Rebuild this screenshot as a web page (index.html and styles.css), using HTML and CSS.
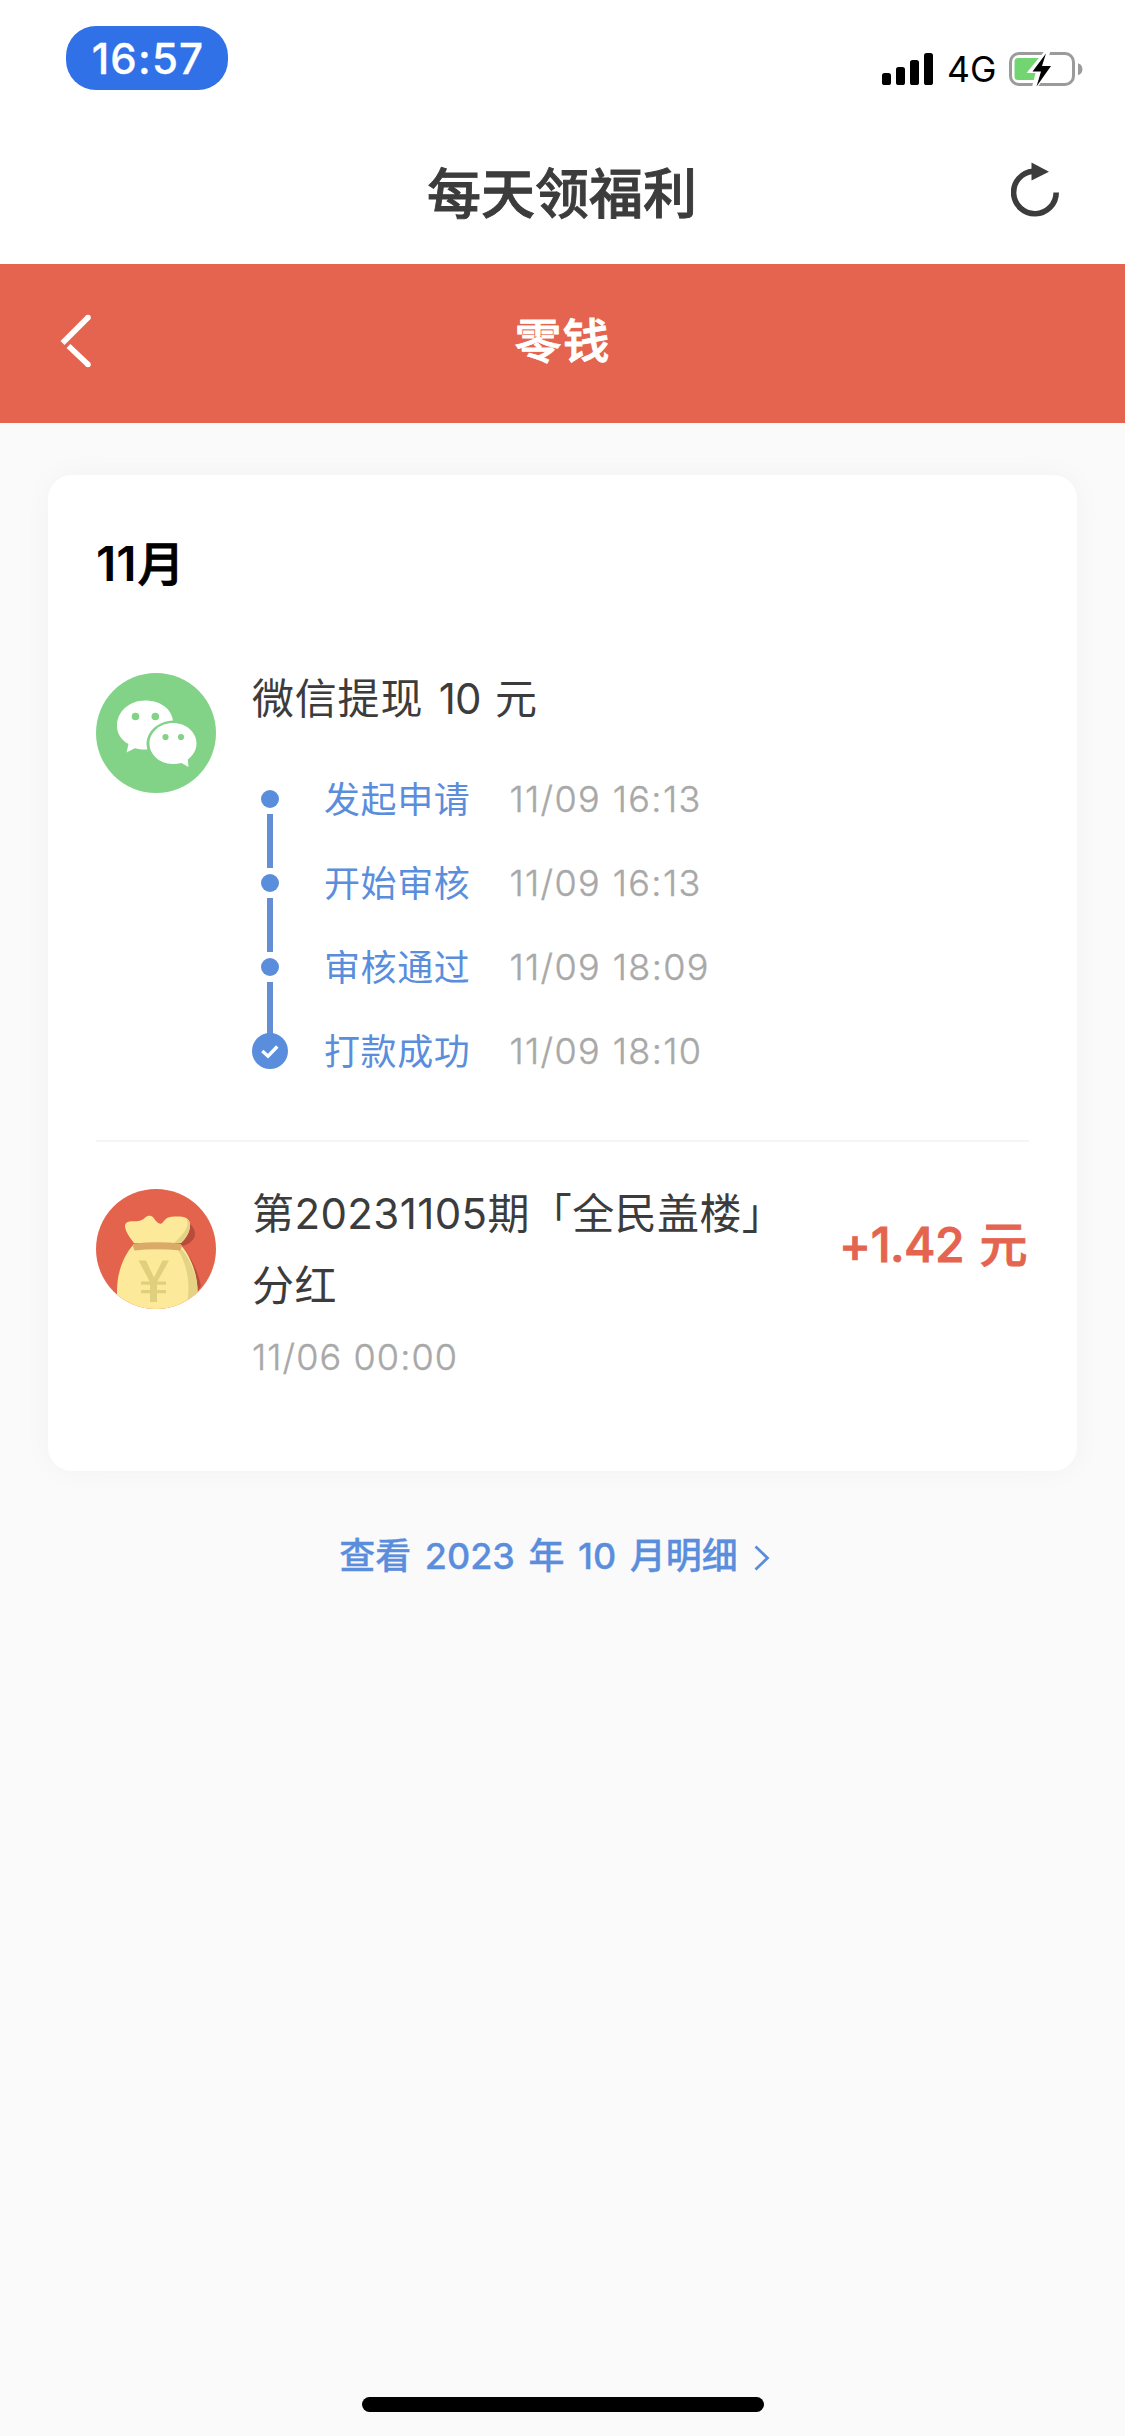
FILE: index.html
```html
<!DOCTYPE html>
<html lang="zh-CN">
<head>
<meta charset="UTF-8">
<title>零钱</title>
<link rel="stylesheet" href="styles.css">
</head>
<body>
<header class="statusbar">
  <span class="clock">16:57</span>
  <div class="indicators">
    <svg class="signal" viewBox="0 0 51 32" width="51" height="32"><rect x="0" y="20" width="9" height="12" rx="2.6"/><rect x="14" y="14" width="9" height="18" rx="2.6"/><rect x="28" y="7" width="9" height="25" rx="2.6"/><rect x="42" y="0" width="9" height="32" rx="2.6"/></svg>
    <span class="network">4G</span>
    <svg class="battery" viewBox="0 0 74 36" width="74" height="36">
      <rect x="1.5" y="2.5" width="63" height="31" rx="8.5" fill="none" stroke="#9b9b9b" stroke-width="3"/>
      <path d="M69 12.2c3 1 4.400 3.200 4.400 6s-1.400 5-4.400 6z" fill="#9b9b9b"/>
      <path d="M9 7h25v22H9a3.500 3.500 0 0 1-3.500-3.500v-15A3.500 3.500 0 0 1 9 7z" fill="#72d572"/>
      <path d="M35.500 0L17.500 22h9L23 36h5.500L46 14h-9L41.500 0z" fill="#fff"/>
      <path d="M37 2.500L23.500 20.500h8.500L27.500 35.500 42 15h-9z" fill="#000"/>
    </svg>
  </div>
</header>
<div class="navbar">
  <h1 class="nav-title">每天领福利</h1>
  <svg class="refresh" viewBox="0 0 48 56" width="48" height="56"><path d="M22 10.200A21.300 21.300 0 1 0 45.200 31.500" fill="none" stroke="#3c3c3c" stroke-width="5.600"/><path d="M20.500 1.500L38 10.800 20.500 19.500z" fill="#3c3c3c"/></svg>
</div>
<div class="subbar">
  <svg class="back" viewBox="0 0 32 54" width="32" height="54" fill="none" stroke="#fff" stroke-width="5.600"><path d="M28 3.500L2.500 29"/><path d="M8.500 32L28 50.500"/><g fill="#fff" stroke="none"><circle cx="28" cy="3.500" r="2.800"/><circle cx="28" cy="50.500" r="2.800"/></g></svg>
  <h2 class="sub-title">零钱</h2>
</div>
<main class="content">
  <section class="card">
    <h3 class="month">11<span>月</span></h3>
    <article class="record">
      <svg class="avatar" viewBox="0 0 120 120" width="120" height="120">
        <circle cx="60" cy="60" r="60" fill="#82d388"/>
        <path d="M49 27.500c15.500 0 26.500 8.500 28 20-15 .5-26.500 11-26.500 24l.8 5c-4.500.2-8.500-.3-12.500-1.200L30.500 79.500l2-8.500C25 67 21 60.500 21 52.500c0-14 12.500-25 28-25z" fill="#fff"/>
        <path d="M77 50c13 0 23.500 9 23.500 20.500 0 6.700-3.600 12-8.700 16l.7 7.500-7-4c-2.800.7-5.500 1-8.500 1-13 0-23.500-9-23.500-20.500S64 50 77 50z" fill="#fff"/>
        <g fill="#82d388"><circle cx="39.500" cy="43.500" r="3.800"/><circle cx="59.300" cy="43.500" r="3.800"/><circle cx="69.500" cy="64" r="3.100"/><circle cx="85" cy="64" r="3.100"/></g>
      </svg>
      <div class="record-body">
        <p class="record-title withdraw">微信提现 <span class="sum">10</span> 元</p>
        <div class="progress">
          <div class="rail">
            <i class="dot"></i><i class="line"></i><i class="dot"></i><i class="line"></i><i class="dot"></i><i class="line last"></i>
            <svg class="done" viewBox="0 0 36 36" width="36" height="36"><circle cx="18" cy="18" r="18" fill="#5a8edc"/><path d="M10.300 18l5.700 5.200 9.300-9.700" fill="none" stroke="#fff" stroke-width="3.400"/></svg>
          </div>
          <ol class="steps">
            <li><b>发起申请</b><time>11/09 16:13</time></li>
            <li><b>开始审核</b><time>11/09 16:13</time></li>
            <li><b>审核通过</b><time>11/09 18:09</time></li>
            <li><b>打款成功</b><time>11/09 18:10</time></li>
          </ol>
        </div>
      </div>
    </article>
    <article class="record income">
      <svg class="avatar" viewBox="0 0 120 120" width="120" height="120">
        <defs><clipPath id="coin"><circle cx="60" cy="60" r="60"/></clipPath></defs>
        <g clip-path="url(#coin)">
          <rect width="120" height="120" fill="#e4634d"/>
          <path d="M94 35c5 4 6 10 4 14-2 4-7 7-12 8 9 11 16 25 19 40l-6 10H80V50z" fill="#b84c3c"/>
          <path d="M38 55h46c10 11 17.500 29 17.500 47v20H21v-20c0-18 6-35 17-47z" fill="#fce99a"/>
          <path d="M38 54c-2-3-9-11-9-17 0-4 4-5 9-4.800 6 .2 8.500-1.200 11-3.500 3-2.500 6-2.500 8.500 0 2 2.500 4 5.800 7 6 3 .1 3.500-6.500 11-7 10-.5 18.500-.5 18.500 8.300 0 8-5 14-9 18z" fill="#fce99a"/>
          <path d="M90 30c4 6 0 13-12 24h7c4-4 9-10 9-18 0-4-1.500-5-4-6zM82 61h4c8 9 14 23 15.500 38v8l-10 6c3-20-1-39-9.500-52z" fill="#e4d384"/>
          <path d="M38 54.500q24-2.500 46 0l2 2-1.500 5q-24-2.500-46 0l-1.500-4z" fill="#dba968"/>
          <path d="M42.500 71.500h7.500l8 17 8.500-17h6.500L61 93v20h-7V93z" fill="#e0cf7c"/>
          <path d="M45 92.500h25v3.200H45zM45 101h25v3.200H45z" fill="#e0cf7c"/>
        </g>
      </svg>
      <div class="record-body">
        <p class="record-title">第20231105期「全民盖楼」分红</p>
        <time class="record-time">11/06 00:00</time>
      </div>
      <strong class="amount">+1.42 元</strong>
    </article>
  </section>
  <a class="more"><span>查看 2023 年 10 月明细</span><svg viewBox="0 0 16 26" width="16" height="26"><path d="M1.500 1.500L13.500 13 1.500 24.500" fill="none" stroke="#5a8edc" stroke-width="2.800"/></svg></a>
</main>
<div class="home-indicator"></div>
</body>
</html>
```
FILE: styles.css
```css
* { box-sizing: border-box; margin: 0; padding: 0; }
body {
  width: 1125px; height: 2436px; overflow: hidden;
  display: flex; flex-direction: column;
  background: #fafafa; color: #3c3c3c;
  font-family: Inter, "Noto Sans CJK SC", sans-serif;
  white-space: nowrap;
}
svg { display: block; flex: none; }
i, b { font-style: normal; font-weight: inherit; }

.statusbar { height: 132px; padding: 26px 42px 0 66px; display: flex; justify-content: space-between; background: #fff; }
.clock { width: 162px; height: 64px; padding-left: 2px; border-radius: 30px; background: #3071e7; color: #fff; font-size: 42px; font-weight: 500; line-height: 65px; letter-spacing: 1.2px; text-align: center; -webkit-text-stroke: .3px; }
.indicators { display: flex; align-items: flex-start; color: #000; }
.signal { margin-top: 27px; }
.network { width: 46px; margin: 24px 16px 0 14px; font-size: 35.5px; line-height: 40px; }
.battery { margin-top: 25px; }

.navbar { height: 132px; padding: 0 66px 0 114px; display: flex; align-items: center; background: #fff; }
.nav-title { flex: 1; margin-top: -7px; padding-right: 1px; font-size: 54px; font-weight: 500; line-height: 80px; text-align: center; -webkit-text-stroke: .9px; }
.refresh { margin-top: -18px; }

.subbar { height: 159px; padding: 0 92px 5px 60px; display: flex; align-items: center; background: #e4644f; color: #fff; }
.sub-title { flex: 1; margin-top: -1px; font-size: 47px; font-weight: 500; line-height: 70px; letter-spacing: 1px; text-align: center; -webkit-text-stroke: .9px; }

.content { flex: 1; padding: 52px 48px 0; }
.card { height: 996px; padding: 52px 48px 0; border-radius: 24px; background: #fff; box-shadow: 0 0 30px rgba(0, 0, 0, .035); }
.month { height: 72px; padding-top: 1px; color: #000; font-size: 48px; font-weight: 600; line-height: 72px; }
.month span { padding-left: 1px; font-size: 47px; font-weight: 500; -webkit-text-stroke: .9px; }
.record { display: flex; gap: 36px; margin-top: 74px; height: 469px; border-bottom: 2px solid #f5f5f5; }
.record-title { font-size: 42px; line-height: 72px; }
.withdraw { height: 50px; padding-top: 1px; line-height: 50px; letter-spacing: .8px; }
.sum { margin: 0 2px 0 3px; letter-spacing: -1px; }
.progress { display: flex; gap: 36px; margin-top: 34px; }
.rail { width: 36px; padding-top: 33px; display: flex; flex-direction: column; align-items: center; }
.dot { width: 18px; height: 18px; border-radius: 50%; background: #5a8edc; }
.line { width: 6px; height: 54px; margin: 6px 0; background: #648fd4; }
.line.last { margin-bottom: -3px; }
.steps { list-style: none; font-size: 36px; line-height: 84px; }
.steps li { display: flex; height: 84px; gap: 39px; }
.steps b { padding-top: 1px; color: #5a8edc; letter-spacing: .6px; }
.steps time, .record-time { color: #a8a8a8; font-weight: 300; -webkit-text-stroke: .4px; }
.steps time { letter-spacing: 1.4px; }

.income { margin-top: 47px; height: 230px; border: 0; }
.income .record-body { width: 540px; margin-top: -11px; }
.income .record-title { height: 144px; white-space: normal; letter-spacing: .4px; }
.record-time { display: block; padding-top: 10px; font-size: 36px; line-height: 50px; letter-spacing: 1.1px; }
.amount { flex: 1; padding: 20px 2px 0 0; color: #e4644f; font-size: 48px; font-weight: 500; line-height: 72px; letter-spacing: -.5px; word-spacing: 3px; text-align: right; -webkit-text-stroke: .9px; }

.more { display: flex; justify-content: center; align-items: center; gap: 16px; margin-top: 55px; padding-right: 16px; height: 60px; color: #5a8edc; font-size: 36px; font-weight: 500; line-height: 60px; word-spacing: 4px; -webkit-text-stroke: .3px; }
.more svg { margin-top: 3px; }
.home-indicator { width: 402px; height: 15px; margin: 0 auto 24px; border-radius: 8px; background: #000; }
```
